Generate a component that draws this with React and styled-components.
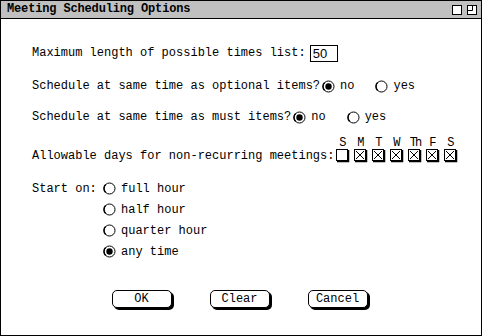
import React from "react";
import styled, { createGlobalStyle } from "styled-components";

const GlobalStyle = createGlobalStyle`
  html, body {
    margin: 0;
    padding: 0;
    background: #ffffff;
  }
  body {
    font-family: "Liberation Mono", "Courier New", monospace;
    font-size: 12px;
    color: #000;
  }
`;

const Window = styled.div`
  width: 482px;
  height: 336px;
  box-sizing: border-box;
  border: 1px solid #000;
  background: #fff;
  display: flex;
  flex-direction: column;
`;

const TitleBar = styled.div`
  height: 17px;
  background: #c0c0c0;
  border-bottom: 1px solid #000;
  display: flex;
  align-items: center;
  justify-content: space-between;
  padding: 0 4px 0 6px;
`;

const Title = styled.span`
  font-weight: bold;
  font-size: 12px;
  line-height: 17px;
  letter-spacing: -0.15px;
`;

const TitleIcons = styled.div`
  display: flex;
  gap: 5px;
  align-items: center;
  padding-top: 1px;
`;

const Body = styled.div`
  padding-left: 31px;
  display: flex;
  flex-direction: column;
`;

const Row = styled.div`
  display: flex;
  align-items: ${(p) => (p.$bottom ? "flex-end" : "center")};
  height: ${(p) => p.$h || 20}px;
  margin-top: ${(p) => p.$mt || 0}px;
  gap: ${(p) => p.$gap ?? 2}px;
`;

const Label = styled.span`
  white-space: pre;
  line-height: 14px;
  font-family: "Liberation Mono", "Courier New", monospace;
`;

const NumBox = styled.div`
  width: 24px;
  height: 15px;
  border: 1px solid #000;
  font-family: "Liberation Sans", Arial, sans-serif;
  font-size: 13px;
  line-height: 15px;
  padding-left: 2px;
  margin-left: 2px;
`;

const Option = styled.label`
  display: flex;
  align-items: center;
  gap: 5px;
  margin-right: ${(p) => p.$mr || 0}px;
`;

const DayCol = styled.div`
  width: 18px;
  display: flex;
  flex-direction: column;
  align-items: flex-start;
`;

const DayLetter = styled.span`
  width: 13px;
  text-align: center;
  font-family: "Liberation Mono", "Courier New", monospace;
  font-size: 12px;
  line-height: 12px;
  white-space: nowrap;
  letter-spacing: ${(p) => (p.$wide ? "-2px" : "0")};
`;

const Days = styled.div`
  display: flex;
  margin-left: 1px;
`;

const StartGrid = styled.div`
  display: grid;
  grid-template-columns: 71px auto;
  margin-top: 15px;
`;

const StartOptions = styled.div`
  display: flex;
  flex-direction: column;
`;

const StartRow = styled.div`
  height: 21px;
  display: flex;
  align-items: center;
`;

const ButtonBar = styled.div`
  display: flex;
  justify-content: center;
  gap: 38px;
  margin-top: 28px;
  padding-right: 3px;
`;

const Button = styled.button`
  width: 60px;
  height: 18px;
  box-sizing: border-box;
  border: 1px solid #000;
  border-radius: 5px;
  background: #fff;
  box-shadow: 2px 2px 0 #000;
  font-family: "Liberation Mono", "Courier New", monospace;
  font-size: 12px;
  padding: 0;
  color: #000;
`;

const Radio = ({ on }) => (
  <svg width="13" height="13" viewBox="0 0 13 13">
    <circle cx="6.5" cy="6.5" r="5.5" fill="#fff" stroke="#000" strokeWidth="1" />
    <path d="M2.6 10.4 A5.5 5.5 0 0 1 2.6 2.6" fill="none" stroke="#000" strokeWidth="1.4" />
    {on && <circle cx="6.5" cy="6.5" r="3.2" fill="#000" />}
  </svg>
);

const Check = ({ on }) => (
  <svg width="14" height="14" viewBox="0 0 14 14">
    <rect x="0.5" y="0.5" width="11" height="11" fill="#fff" stroke="#000" />
    <path d="M1 12.5 H12.5 V1" fill="none" stroke="#000" strokeWidth="1.5" />
    {on && <path d="M2 2 L10 10 M10 2 L2 10" stroke="#000" strokeWidth="1" />}
  </svg>
);

const BoxIcon = ({ restore }) => (
  <svg width="10" height="10" viewBox="0 0 10 10">
    <rect x="0.5" y="0.5" width="9" height="9" fill="#fff" stroke="#000" />
    {restore && <path d="M5.5 1 V5.5 H1" fill="none" stroke="#000" />}
  </svg>
);

const days = [
  ["S", false],
  ["M", true],
  ["T", true],
  ["W", true],
  ["Th", true],
  ["F", true],
  ["S", true],
];

const starts = [
  ["full hour", false],
  ["half hour", false],
  ["quarter hour", false],
  ["any time", true],
];

export default function App() {
  return (
    <>
      <GlobalStyle />
      <Window>
        <TitleBar>
          <Title>Meeting Scheduling Options</Title>
          <TitleIcons>
            <BoxIcon />
            <BoxIcon restore />
          </TitleIcons>
        </TitleBar>
        <Body>
          <Row $mt={24}>
            <Label>Maximum length of possible times list:</Label>
            <NumBox>50</NumBox>
          </Row>
          <Row $mt={13}>
            <Label>Schedule at same time as optional items?</Label>
            <Option $mr={19}>
              <Radio on />
              <Label>no</Label>
            </Option>
            <Option>
              <Radio />
              <Label>yes</Label>
            </Option>
          </Row>
          <Row $mt={11}>
            <Label>Schedule at same time as must items?</Label>
            <Option $mr={19}>
              <Radio on />
              <Label>no</Label>
            </Option>
            <Option>
              <Radio />
              <Label>yes</Label>
            </Option>
          </Row>
          <Row $mt={9} $h={27} $bottom $gap={1}>
            <Label>Allowable days for non-recurring meetings:</Label>
            <Days>
              {days.map(([d, on], i) => (
                <DayCol key={i}>
                  <DayLetter $wide={d.length > 1}>{d}</DayLetter>
                  <Check on={on} />
                </DayCol>
              ))}
            </Days>
          </Row>
          <StartGrid>
            <StartRow>
              <Label>Start on:</Label>
            </StartRow>
            <StartOptions>
              {starts.map(([t, on]) => (
                <StartRow key={t}>
                  <Option>
                    <Radio on={on} />
                    <Label>{t}</Label>
                  </Option>
                </StartRow>
              ))}
            </StartOptions>
          </StartGrid>
        </Body>
        <ButtonBar>
          <Button>OK</Button>
          <Button>Clear</Button>
          <Button>Cancel</Button>
        </ButtonBar>
      </Window>
    </>
  );
}
